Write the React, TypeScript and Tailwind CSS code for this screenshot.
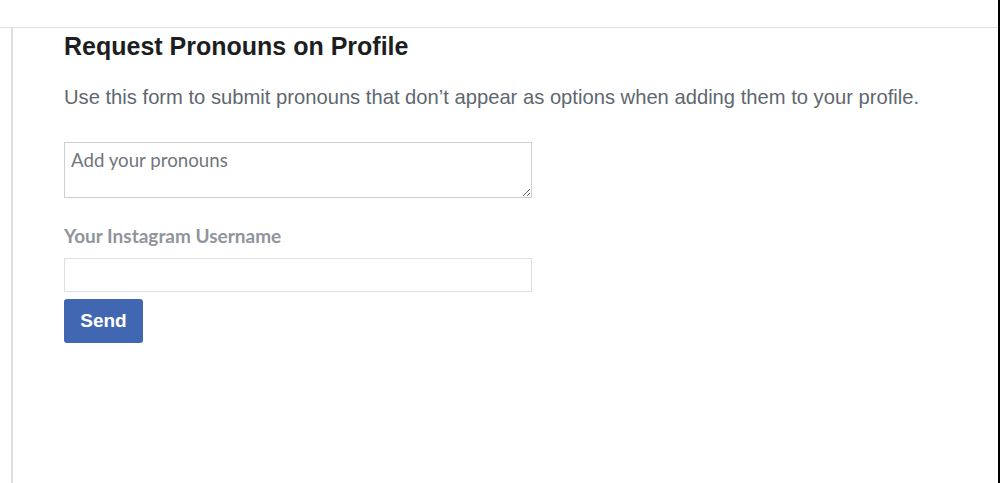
export default function App() {
  return (
    <div className="flex h-[483px] w-[1000px] flex-col overflow-hidden border-r-2 border-black bg-white font-['Liberation_Sans',Arial,sans-serif]">
      <div className="h-[28px] shrink-0 border-b border-[#dddfe2]" />
      <div className="flex flex-1">
        <div className="w-[13px] shrink-0 border-r-2 border-[#dddfe2]" />
        <main className="pl-[51px] pt-[3px]">
          <h1 className="text-[25px] font-bold leading-[30px] text-[#1c1e21]">Request Pronouns on Profile</h1>
          <p className="mt-[23px] text-[20.2px] leading-[26px] text-[#606770]">
            Use this form to submit pronouns that don’t appear as options when adding them to your profile.
          </p>
          <form className="mt-[32px]" onSubmit={(e) => e.preventDefault()}>
            <textarea
              placeholder="Add your pronouns"
              className="block h-[56px] w-[468px] border border-[#ccd0d5] px-[6px] py-[6px] font-['Lato',sans-serif] text-[18.7px] leading-[22px] text-[#1c1e21] placeholder:text-[#71767c]"
            />
            <label className="mt-[27px] block font-['Lato',sans-serif] text-[19px] font-bold leading-[22px] text-[#90949c]">
              Your Instagram Username
            </label>
            <input
              type="text"
              className="mt-[11px] block h-[34px] w-[468px] border border-[#dddfe2] px-[6px] text-[16px]"
            />
            <button
              type="submit"
              className="mt-[7px] h-[44px] w-[79px] rounded-[3px] bg-[#4267b2] text-[19px] font-bold text-white"
            >
              Send
            </button>
          </form>
        </main>
      </div>
    </div>
  );
}
